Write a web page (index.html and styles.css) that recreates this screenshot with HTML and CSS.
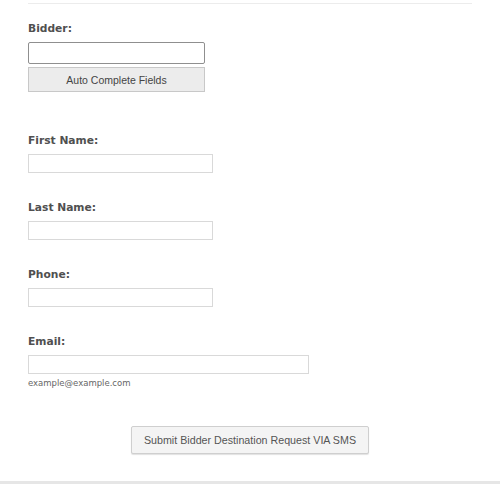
FILE: index.html
```html
<!DOCTYPE html>
<html lang="en">
<head>
    <meta charset="UTF-8">
    <meta name="viewport" content="width=device-width, initial-scale=1.0">
    <title>Bidder Destination</title>
    <link rel="stylesheet" href="styles.css">
</head>
<body>
    <form class="form">
        <div class="divider"></div>

        <div class="field field-bidder">
            <label for="bidder">Bidder:</label>
            <input type="text" id="bidder" class="input-bidder">
            <button type="button" class="btn-auto">Auto Complete Fields</button>
        </div>

        <div class="field">
            <label for="first-name">First Name:</label>
            <input type="text" id="first-name" class="input-text">
        </div>

        <div class="field">
            <label for="last-name">Last Name:</label>
            <input type="text" id="last-name" class="input-text">
        </div>

        <div class="field">
            <label for="phone">Phone:</label>
            <input type="text" id="phone" class="input-text">
        </div>

        <div class="field">
            <label for="email">Email:</label>
            <input type="text" id="email" class="input-text input-wide">
            <div class="hint">example@example.com</div>
        </div>

        <div class="actions">
            <button type="submit" class="btn-submit">Submit Bidder Destination Request VIA SMS</button>
        </div>
    </form>
    <div class="footer-line"></div>
</body>
</html>
```

FILE: styles.css
```css
body { margin: 0; background: #fff; font-family: "DejaVu Sans", Verdana, sans-serif; height: 484px; display: flex; flex-direction: column; }
.form { padding: 3px 28px 0 28px; width: 444px; flex-grow: 1; }
.divider { height: 1px; background-color: #ececec; }
.field { margin-top: 28px; }
.field-bidder { margin-top: 18px; margin-bottom: 42px; }
.field label { display: block; font-size: 10.7px; line-height: 14px; font-weight: bold; color: #505050; margin-bottom: 6px; }
.input-bidder { display: block; box-sizing: border-box; width: 177px; height: 22px; margin: 0; border: 1px solid #8f8f8f; border-radius: 2px; background: #fff; }
.btn-auto { display: block; box-sizing: border-box; width: 177px; height: 25px; margin: 3px 0 0 0; border: 1px solid #c8c8c8; background-color: #ececec; font-family: "Liberation Sans", Arial, sans-serif; font-size: 10.5px; color: #444; padding: 0; }
.input-text { display: block; box-sizing: border-box; width: 185px; height: 19px; margin: 0; border: 1px solid #d9d9d9; background: #fff; }
.input-wide { width: 281px; }
.hint { font-size: 8.5px; line-height: 12px; color: #666; margin-top: 3px; }
.actions { margin-top: 37px; padding-left: 103px; }
.btn-submit { box-sizing: border-box; width: 238px; height: 28px; margin: 0; padding: 0; border: 1px solid #cfcfcf; border-radius: 2px; background-color: #f4f4f4; box-shadow: 0 1px 1px rgba(0,0,0,0.12); font-family: "Liberation Sans", Arial, sans-serif; font-size: 10.7px; color: #555; }
.footer-line { height: 3px; background-color: #e6e6e6; }
```
